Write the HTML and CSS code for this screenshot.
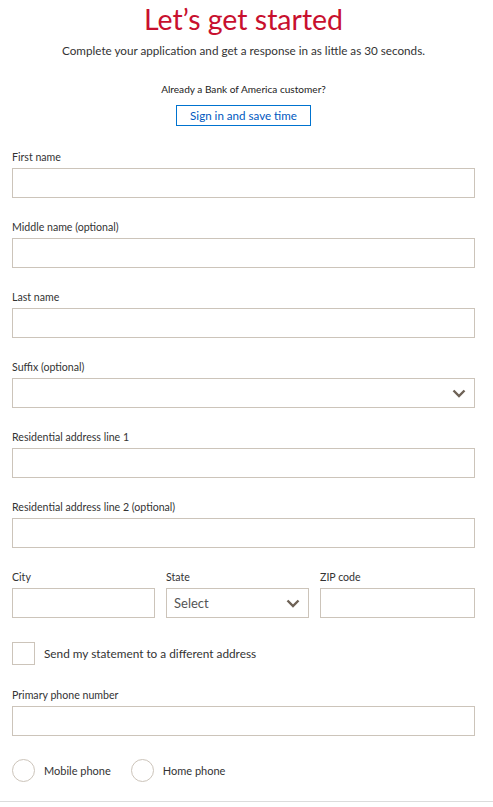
FILE: index.html
```html
<!DOCTYPE html>
<html lang="en">
<head>
<meta charset="utf-8">
<title>Let’s get started</title>
<link rel="stylesheet" href="styles.css">
</head>
<body>
<div class="page">
  <header class="intro">
    <h1 class="title">Let’s get started</h1>
    <p class="subtitle">Complete your application and get a response in as little as 30 seconds.</p>
    <p class="customer">Already a Bank of America customer?</p>
    <button class="signin" type="button">Sign in and save time</button>
  </header>

  <form class="form">
    <div class="field">
      <label class="label" for="first">First name</label>
      <input class="input" id="first" type="text">
    </div>
    <div class="field">
      <label class="label" for="middle">Middle name (optional)</label>
      <input class="input" id="middle" type="text">
    </div>
    <div class="field">
      <label class="label" for="last">Last name</label>
      <input class="input" id="last" type="text">
    </div>
    <div class="field">
      <label class="label" for="suffix">Suffix (optional)</label>
      <div class="select-wrap">
        <select class="input select" id="suffix"><option></option></select>
        <svg class="chevron" width="14" height="9" viewBox="0 0 14 9"><path d="M1.5 1.5 L7 7 L12.5 1.5" fill="none" stroke="#6e6256" stroke-width="2.4"/></svg>
      </div>
    </div>
    <div class="field">
      <label class="label" for="addr1">Residential address line 1</label>
      <input class="input" id="addr1" type="text">
    </div>
    <div class="field">
      <label class="label" for="addr2">Residential address line 2 (optional)</label>
      <input class="input" id="addr2" type="text">
    </div>
    <div class="field row3">
      <div class="col">
        <label class="label" for="city">City</label>
        <input class="input" id="city" type="text">
      </div>
      <div class="col">
        <label class="label" for="state">State</label>
        <div class="select-wrap">
          <select class="input select" id="state"><option>Select</option></select>
          <svg class="chevron" width="14" height="9" viewBox="0 0 14 9"><path d="M1.5 1.5 L7 7 L12.5 1.5" fill="none" stroke="#6e6256" stroke-width="2.4"/></svg>
        </div>
      </div>
      <div class="col">
        <label class="label" for="zip">ZIP code</label>
        <input class="input" id="zip" type="text">
      </div>
    </div>
    <label class="check">
      <span class="box"></span>
      <span class="check-text">Send my statement to a different address</span>
    </label>
    <div class="field phone">
      <label class="label" for="phone">Primary phone number</label>
      <input class="input" id="phone" type="text">
    </div>
    <div class="radios">
      <label class="radio"><span class="circle"></span><span class="radio-text">Mobile phone</span></label>
      <label class="radio"><span class="circle"></span><span class="radio-text">Home phone</span></label>
    </div>
  </form>
</div>
</body>
</html>
```
FILE: styles.css
```css
* { box-sizing: border-box; }
html, body { margin: 0; padding: 0; background: #fff; }
body {
  font-family: Lato, "Open Sans", sans-serif;
  color: #333;
}
.page { width: 493px; }
.intro { text-align: center; padding-top: 2px; width: 487px; }
.title {
  margin: 0;
  font-weight: 400;
  font-size: 28.5px;
  line-height: 34px;
  color: #c8102e;
}
.subtitle {
  margin: 6px 0 0;
  font-size: 11.7px;
  line-height: 16px;
  color: #333;
}
.customer {
  margin: 24px 0 0;
  font-size: 10.1px;
  line-height: 14px;
  color: #222;
}
.signin {
  margin-top: 9px;
  width: 135px;
  height: 21px;
  padding: 0;
  background: #fff;
  border: 1px solid #0073cf;
  color: #0058c0;
  font-family: inherit;
  font-size: 11.6px;
  line-height: 19px;
  cursor: pointer;
}
.form {
  padding: 25px 18px 0 12px;
  border-bottom: 1px solid #dcdcdc;
  padding-bottom: 19px;
}
.field { margin-bottom: 23.5px; }
.label {
  display: block;
  font-size: 10.6px;
  line-height: 12px;
  margin-bottom: 4.5px;
  color: #333;
}
.input {
  display: block;
  width: 100%;
  height: 30px;
  margin: 0;
  border: 1px solid #ccc4ba;
  border-radius: 0;
  background: #fff;
  font-family: inherit;
  font-size: 13px;
  color: #555;
  padding: 0 7px;
  outline: none;
}
.select-wrap { position: relative; }
.select {
  appearance: none;
  -webkit-appearance: none;
}
.chevron {
  position: absolute;
  right: 9px;
  top: 11px;
}
.row3 {
  display: grid;
  grid-template-columns: 143px 143px 1fr;
  column-gap: 11px;
  margin-bottom: 24px;
}
.check {
  display: flex;
  align-items: center;
  gap: 9px;
  margin-bottom: 24.5px;
}
.box {
  width: 23px;
  height: 23px;
  border: 1px solid #ccc4ba;
  background: #fff;
}
.check-text { font-size: 11.8px; color: #333; }
.radio-text { font-size: 11px; color: #333; }
.phone { margin-bottom: 23px; }
.radios { display: flex; gap: 20px; }
.radio {
  display: flex;
  align-items: center;
  gap: 9px;
}
.circle {
  width: 23px;
  height: 23px;
  border: 1px solid #ccc4ba;
  border-radius: 50%;
  background: #fff;
}
```
